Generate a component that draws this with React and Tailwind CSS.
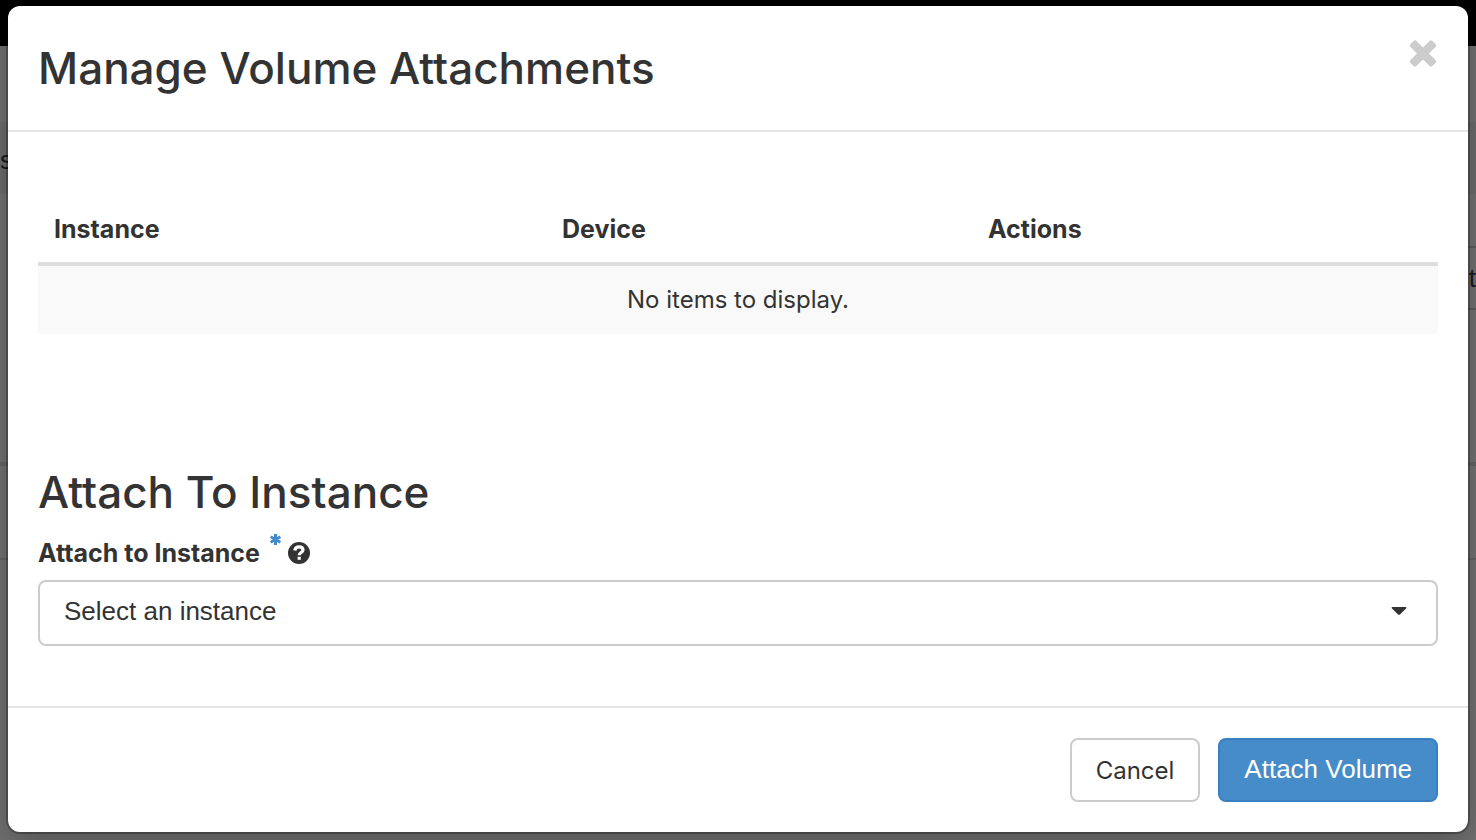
import React from "react";

function CloseIcon() {
  return (
    <svg className="size-[28px]" viewBox="0 0 28 28" aria-hidden="true">
      <g fill="currentColor" transform="rotate(45 13 13.5)">
        <rect x="-2.5" y="9.3" width="31" height="8.4" rx="2" />
        <rect x="8.8" y="-2" width="8.4" height="31" rx="2" />
      </g>
    </svg>
  );
}

function Backdrop() {
  return (
    <div
      aria-hidden="true"
      className="absolute inset-0 flex flex-col overflow-hidden bg-[#707070] text-[26px] leading-[30px] text-[#1a1a1a]"
    >
      <div className="h-[46px] bg-black" />
      <div className="h-[76px]" />
      <div className="flex h-[72px] items-center bg-[#6a6a6a] pt-1">s</div>
      <div className="h-[52px]" />
      <div className="flex h-[64px] items-stretch justify-end">
        <div className="flex w-1/2 items-center justify-end border-y-2 border-[#5c5c5c]">t</div>
      </div>
      <div className="h-[152px]" />
      <div className="h-[4px] bg-[#626262]" />
      <div className="h-[92px]" />
      <div className="h-[2px] bg-[#626262]" />
    </div>
  );
}

export default function App() {
  return (
    <div className="relative min-h-screen px-2 pt-[6px] pb-2 font-['Liberation_Sans',Arial,sans-serif] text-[26px] leading-[36px] text-[#333]">
      <Backdrop />
      <div
        role="dialog"
        aria-labelledby="title"
        className="relative rounded-[12px] bg-white shadow-[0_0_0_2px_rgba(0,0,0,0.25),0_10px_30px_rgba(0,0,0,0.25)]"
      >
        <header className="flex items-start justify-between border-b-2 border-[#e5e5e5] p-[30px]">
          <h1
            id="title"
            className="font-['Inter',sans-serif] text-[44px] leading-[64px] font-medium"
          >
            Manage Volume Attachments
          </h1>
          <button type="button" aria-label="Close" className="mt-1 text-[#ccc]">
            <CloseIcon />
          </button>
        </header>

        <main className="px-[30px] pt-[64px] pb-[60px]">
          <table className="w-full table-fixed border-collapse">
            <thead>
              <tr className="border-b-4 border-[#ddd] text-left font-['Inter',sans-serif] text-[25px] leading-[34px]">
                <th className="w-[508px] p-4 font-bold">Instance</th>
                <th className="w-[426px] p-4 font-bold">Device</th>
                <th className="p-4 font-bold">Actions</th>
              </tr>
            </thead>
            <tbody>
              <tr className="bg-[#f9f9f9]">
                <td
                  colSpan={3}
                  className="p-4 text-center font-['Inter',sans-serif] text-[24px]"
                >
                  No items to display.
                </td>
              </tr>
            </tbody>
          </table>

          <h2 className="mt-[132px] font-['Inter',sans-serif] text-[44px] leading-[52px] font-medium">
            Attach To Instance
          </h2>
          <div className="mt-4 flex items-center">
            <label
              htmlFor="instance"
              className="font-['Inter',sans-serif] text-[25px] font-bold"
            >
              Attach to Instance
            </label>
            <svg className="mb-[26px] ml-[10px] size-[11px]" viewBox="0 0 11 11" aria-hidden="true">
              <path
                d="M5.5 0V11M0.6 2.7L10.4 8.3M10.4 2.7L0.6 8.3"
                stroke="#428bca"
                strokeWidth="3"
              />
            </svg>
            <svg className="ml-[7px] size-[22px]" viewBox="0 0 22 22" aria-hidden="true">
              <circle cx="11" cy="11" r="11" fill="#333" />
              <path
                d="M6.8 8.4C7.2 5.6 8.9 4.9 11.1 4.9C13.6 4.9 15 6.2 15 8C15 10.4 11.2 10.6 11.2 13.2"
                fill="none"
                stroke="#fff"
                strokeWidth="3.2"
              />
              <rect x="9.6" y="14.8" width="3.2" height="3" fill="#fff" />
            </svg>
          </div>
          <div className="mt-[9px] grid items-center">
            <select
              id="instance"
              className="col-start-1 row-start-1 h-[66px] w-full appearance-none rounded-[8px] border-2 border-[#ccc] bg-white px-6 pb-1"
            >
              <option>Select an instance</option>
            </select>
            <svg
              className="pointer-events-none col-start-1 row-start-1 mr-[31px] mb-1 h-[8px] w-[16px] justify-self-end"
              viewBox="0 0 16 8"
              aria-hidden="true"
            >
              <path d="M1.5 0H14.5Q16 .4 15 1.4L9 7.4Q8 8.3 7 7.4L1 1.4Q0 .4 1.5 0Z" fill="#333" />
            </svg>
          </div>
        </main>

        <footer className="flex justify-end gap-[18px] border-t-2 border-[#e5e5e5] p-[30px]">
          <button
            type="button"
            className="h-[64px] rounded-[8px] border-2 border-[#ccc] bg-white px-6 pt-0.5 font-['Inter',sans-serif] text-[24px]"
          >
            Cancel
          </button>
          <button
            type="button"
            className="h-[64px] rounded-[8px] border-2 border-[#3a80c0] bg-[#468cc8] px-6 pb-0.5 text-white"
          >
            Attach Volume
          </button>
        </footer>
      </div>
    </div>
  );
}
